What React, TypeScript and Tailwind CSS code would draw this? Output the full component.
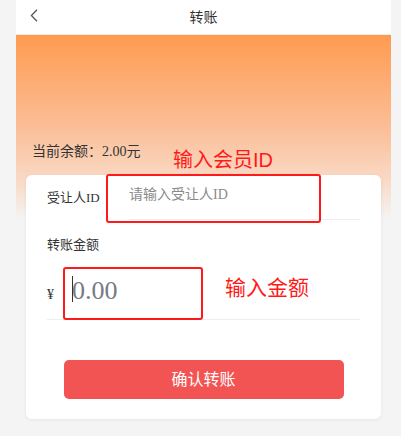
export default function App() {
  const base = { fontFamily: '"Liberation Serif", "Noto Sans CJK SC", serif' };
  const sans = { fontFamily: '"Liberation Sans", "Noto Sans CJK SC", sans-serif' };
  return (
    <div className="relative w-[401px] h-[436px] bg-[#f4f4f4] flex pl-[16px] overflow-hidden" style={base}>
      <div className="w-[375px] flex flex-col">
        <div className="relative h-[35px] bg-white border-b border-[#ececec] flex items-center justify-center">
          <svg className="absolute left-[14px] top-[9px]" width="8" height="13" viewBox="0 0 8 13">
            <path d="M7 0.8 L1.4 6.5 L7 12.2" stroke="#555" strokeWidth="1.3" fill="none" />
          </svg>
          <span className="text-[14px] leading-[20px] text-[#333]" style={sans}>转账</span>
        </div>
        <div className="flex-1 bg-no-repeat bg-[linear-gradient(180deg,#ff9b50_0px,#fbbd95_90px,#f9d9c5_145px,#f4f4f4_185px)]">
          <div className="h-[140px] pt-[107px] pl-[16px] text-[14px] leading-[20px] text-[#333]">当前余额：2.00元</div>
          <div className="mx-[10px] bg-white rounded-[6px] shadow-[0_1px_4px_rgba(0,0,0,0.06)] px-[21px] pb-[20px]">
            <div className="h-[45px] flex items-center">
              <div className="w-[82px] text-[13px] leading-[20px] text-[#333]">受让人ID</div>
              <div className="flex-1 h-full border-b border-[#eeeeee] flex items-center pb-[5px]">
                <span className="text-[14px] leading-[20px] text-[#8a8a8a]">请输入受让人ID</span>
              </div>
            </div>
            <div className="mt-[15px] text-[13px] leading-[20px] text-[#333]">转账金额</div>
            <div className="h-[65px] border-b border-[#eeeeee] flex items-baseline pt-[22px]">
              <span className="text-[14px] leading-none text-[#333] w-[25px]">¥</span>
              <span className="relative text-[26px] leading-[28px] text-[#767b86]">
                <span className="absolute left-0 top-[-1px] w-[1px] h-[26px] bg-[#333]" />
                0.00
              </span>
            </div>
            <div className="mt-[40px] mx-auto w-[280px] h-[39px] rounded-[5px] bg-[#f25454] flex items-center justify-center">
              <span className="text-[16px] text-white" style={sans}>确认转账</span>
            </div>
          </div>
        </div>
      </div>
      <div className="absolute left-[106px] top-[174px] w-[215px] h-[49px] border-2 border-[#ff1a1a] rounded-[3px]" />
      <div className="absolute left-[63px] top-[267px] w-[140px] h-[53px] border-2 border-[#ff1a1a] rounded-[3px]" />
      <div className="absolute left-[173px] top-[148px] text-[20px] leading-[24px] text-[#ff1a1a]" style={sans}>输入会员ID</div>
      <div className="absolute left-[225px] top-[276px] text-[21px] leading-[24px] text-[#ff1a1a]" style={sans}>输入金额</div>
    </div>
  );
}
